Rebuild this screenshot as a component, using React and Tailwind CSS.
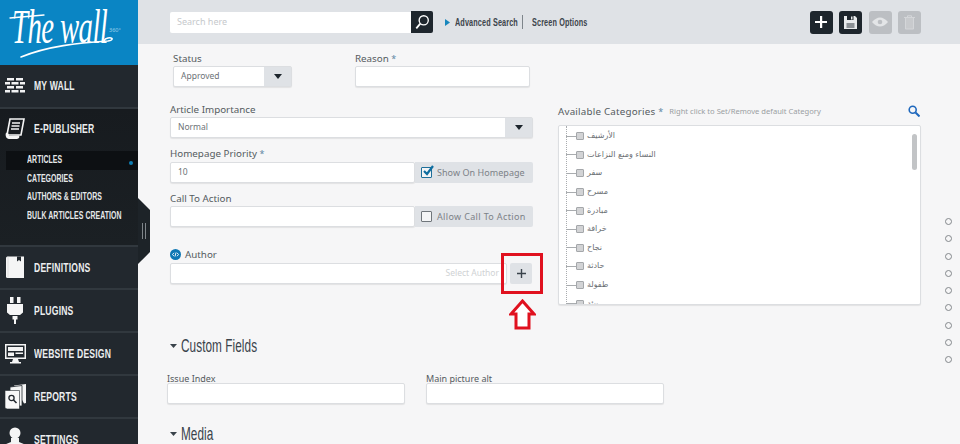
import React from "react";

const narrow = "font-['Liberation_Sans',sans-serif] inline-block origin-left scale-x-[0.66] whitespace-nowrap";
const body = "font-['Noto_Sans','DejaVu_Sans',sans-serif]";
const field = "bg-white border border-[#dcdee1] rounded-[2px] shadow-[0_1px_1px_rgba(0,0,0,0.08)]";
const iconCol = "w-[34px] pr-[4px] flex justify-center shrink-0";

const Caret = () => (
  <svg width="8" height="5" viewBox="0 0 8 5"><path d="M0 0h8L4 5z" fill="#1d252c" /></svg>
);

const icons = {
  wall: (
    <svg width="20" height="18" viewBox="0 0 20 18" fill="#f1f2f3">
      <path d="M2 1h7v2.500H2zM11 1h7v2.500h-7zM0 5h5v2.500H0zM6.500 5h7v2.500h-7zM15 5h5v2.500h-5zM2 9h7v2.500H2zM11 9h7v2.500h-7zM0 13h5v2.500H0zM6.500 13h7v2.500h-7zM15 13h5v2.500h-5z" />
    </svg>
  ),
  book: (
    <svg width="20" height="23" viewBox="0 0 20 23">
      <path d="M1 2q0-1.500 1.500-1.500H19V22H2.500Q1 22 1 20.500z" fill="#f5f5f5" />
      <path d="M12 .5h4v5l-2-1.500-2 1.500z" fill="#22282e" />
      <path d="M3 .5v21" stroke="#d0d0d0" strokeWidth=".6" />
    </svg>
  ),
  plug: (
    <svg width="18" height="27" viewBox="0 0 18 27" fill="#f5f5f5">
      <path d="M4 0h3.500v6H4zM11 0h3.500v6H11zM1 7h16v8.500l-3 2.500H4l-3-2.500zM6.500 19h5v3.500h-1.500V27H8v-4.500H6.500z" />
    </svg>
  ),
  monitor: (
    <svg width="21" height="20" viewBox="0 0 21 20">
      <path d="M0 0h21v15H0z" fill="#f5f5f5" />
      <path d="M1.500 1.500h18v12h-18z" fill="#22282e" />
      <path d="M3 3h15v4H3zM3 8.500h6v3.500H3zM10.500 8.500H18v1.500h-7.500z" fill="#f5f5f5" />
      <path d="M8 15h5l1 3h2v1.500H5V18h2z" fill="#f5f5f5" />
    </svg>
  ),
  reports: (
    <svg width="21" height="26" viewBox="0 0 21 26">
      <path d="M8 0l12-1.500v19L18 18z" fill="#f5f5f5" transform="translate(1 1.500)" />
      <path d="M5 3l12-1.500V22H5z" fill="#f5f5f5" stroke="#22282e" strokeWidth=".8" />
      <path d="M0 6.500h14.500V25H2l-2-1z" fill="#f8f8f8" stroke="#22282e" strokeWidth=".6" />
      <circle cx="6.500" cy="14" r="2.600" fill="none" stroke="#22282e" strokeWidth="1.300" />
      <path d="M8.500 16l3 3" stroke="#22282e" strokeWidth="1.600" />
    </svg>
  ),
  user: (
    <svg width="22" height="26" viewBox="0 0 22 26" fill="#f5f5f5">
      <circle cx="11" cy="6" r="5.500" />
      <path d="M7 11h8v4l6 2.500V24H1v-6.500L7 15z" />
    </svg>
  ),
};

const navText = `${narrow} text-[#eceeef] font-bold text-[13px] tracking-[0.3px]`;

const NavItem = ({ icon, label }) => (
  <div className="h-[43px] flex items-center bg-[#22282e] border-t-2 border-[#31383e] shrink-0">
    <div className={iconCol}>{icon}</div>
    <span className={navText}>{label}</span>
  </div>
);

const SubItem = ({ label, active }) => (
  <div className={`relative ml-[6px] h-[18.500px] pl-[21px] flex items-center ${active ? "bg-[#0d1013]" : ""}`}>
    <span className={`${narrow} text-[#e6e8ea] font-bold text-[10.500px] tracking-[0.1px]`}>{label}</span>
    {active && <span className="absolute right-[5px] top-[10px] w-[4px] h-[4px] rounded-full bg-[#0f7fb5]" />}
  </div>
);

const Sidebar = () => (
  <aside className="w-[138px] shrink-0 flex flex-col h-full">
    <div className="h-[65px] bg-[#0a85c4] relative overflow-hidden shrink-0">
      <span className="absolute left-[12px] top-[3px] font-['Liberation_Serif',serif] italic text-white text-[48px] leading-none tracking-[-1px] origin-left scale-x-[0.6] whitespace-nowrap">The wall</span>
      <span className={`${body} absolute left-[109px] top-[26px] text-[5.500px] text-[#9fd0ea]`}>360°</span>
      <svg className="absolute left-[8px] top-[12px]" width="106" height="48" viewBox="0 0 106 48" fill="none">
        <path d="M2 6L36 3" stroke="#fff" strokeWidth="1.300" strokeLinecap="round" />
        <path d="M13 45C40 34 70 31 100 29c6-1 5-4 0-3-4 1-5 3-2 4" stroke="#fff" strokeWidth="1.600" strokeLinecap="round" />
      </svg>
    </div>
    <div className="h-[42px] flex items-center bg-[#22282e] shrink-0">
      <div className={iconCol}>{icons.wall}</div>
      <span className={navText}>MY WALL</span>
    </div>
    <div className="h-[138px] shrink-0 bg-gradient-to-b from-[#171b1f] to-[#1b2024] border-t-2 border-[#31383e]">
      <div className="h-[39px] mb-[3px] flex items-center">
        <div className={iconCol}>
          <svg width="20" height="22" viewBox="0 0 20 22">
            <path d="M5 1h14l-3 16H2z" fill="none" stroke="#f5f5f5" strokeWidth="1.600" />
            <path d="M7 5h8M6.500 8h8M6 11h8" stroke="#f5f5f5" strokeWidth="1.300" />
            <path d="M1 15c2-1 3 1 3 3l10-.5c1 2 0 3-2 3.500H4C1 21 0 17 1 15z" fill="#f5f5f5" />
          </svg>
        </div>
        <span className={navText}>E-PUBLISHER</span>
      </div>
      <SubItem label="ARTICLES" active />
      <SubItem label="CATEGORIES" />
      <SubItem label="AUTHORS & EDITORS" />
      <SubItem label="BULK ARTICLES CREATION" />
    </div>
    <NavItem icon={icons.book} label="DEFINITIONS" />
    <NavItem icon={icons.plug} label="PLUGINS" />
    <NavItem icon={icons.monitor} label="WEBSITE DESIGN" />
    <NavItem icon={icons.reports} label="REPORTS" />
    <NavItem icon={icons.user} label="SETTINGS" />
  </aside>
);

const HeadBtn = ({ on, children }) => (
  <div className={`w-[23px] h-[23px] rounded-[3px] flex items-center justify-center ${on ? "bg-[#1e262d]" : "bg-[#bcbfc3]"}`}>{children}</div>
);

const headLink = `${narrow} text-[11px] text-[#3d454c] font-bold tracking-[0.2px]`;

const Header = () => (
  <header className="relative h-[44px] shrink-0 bg-[#dfe2e6] flex items-center pl-[32px] pr-[39px]">
    <div className="w-[241px] h-[21px] bg-white rounded-l-[2px] flex items-center pl-[7px]">
      <span className={`${body} text-[9px] text-[#c6c9cc]`}>Search here</span>
    </div>
    <div className="w-[22px] h-[22px] bg-[#1e262d] rounded-r-[2px] flex items-center justify-center">
      <svg width="16" height="16" viewBox="0 0 14 14" fill="none" stroke="#fff">
        <circle cx="8.500" cy="5.500" r="4" strokeWidth="1.200" />
        <path d="M5.500 8.500L2 12.500" strokeWidth="1.600" />
      </svg>
    </div>
    <svg className="ml-[12px]" width="5" height="7" viewBox="0 0 5 7"><path d="M0 0l5 3.500L0 7z" fill="#1787bd" /></svg>
    <span className={`${headLink} ml-[5px] w-[61px]`}>Advanced Search</span>
    <span className="w-px h-[14px] bg-[#7e858b] ml-[6px]" />
    <span className={`${headLink} ml-[9px] w-[53px]`}>Screen Options</span>
    <div className="ml-auto flex gap-[6.500px]">
      <HeadBtn on>
        <svg width="14" height="14" viewBox="0 0 14 14"><path d="M6 1h2.200v4.900H13v2.200H8.200V13H6V8.100H1V5.900h5z" fill="#fff" /></svg>
      </HeadBtn>
      <HeadBtn on>
        <svg width="15" height="15" viewBox="0 0 15 15">
          <path d="M1 1h11l2 2v11H1z" fill="#e8eaec" />
          <path d="M4 1h6.500v4H4z" fill="#1e262d" />
          <path d="M8 1.500h1.500v3H8z" fill="#e8eaec" />
          <path d="M3.500 8h8v5h-8z" fill="#8b9095" />
        </svg>
      </HeadBtn>
      <HeadBtn>
        <svg width="16" height="10" viewBox="0 0 16 10">
          <path d="M0 5q8-9 16 0q-8 9-16 0z" fill="#e3e5e7" />
          <circle cx="8" cy="5" r="2.300" fill="#bcbfc3" />
        </svg>
      </HeadBtn>
      <HeadBtn>
        <svg width="11" height="15" viewBox="0 0 11 15" fill="none" stroke="#d4d6d9">
          <path d="M0 2.500h11M3.500 2.500V.8h4v1.700" />
          <path d="M1.500 3v11h8V3" fill="#c8cacd" />
        </svg>
      </HeadBtn>
    </div>
    <div className="absolute left-[222px] top-[44px] w-[170px] h-px bg-[#e6e7e9]" />
    <div className="absolute left-[612px] top-[44px] w-[170px] h-px bg-[#e6e7e9]" />
  </header>
);

const labelCls = `${body} block h-[14px] pt-[1px] text-[9.800px] leading-[14px] text-[#555b60] whitespace-nowrap`;
const smallLabel = `${body} block h-[12px] pt-[2px] text-[9px] leading-[12px] text-[#555b60] whitespace-nowrap`;
const star = "text-[#5f87a3] text-[9px]";

const Select = ({ value, className }) => (
  <div className={`${field} h-[21px] flex items-center ${className}`}>
    <span className={`${body} pl-[7px] text-[8.500px] text-[#6d7277]`}>{value}</span>
    <div className="ml-auto w-[27px] h-full bg-[#dfe2e6] flex items-center justify-center"><Caret /></div>
  </div>
);

const CheckAddon = ({ checked, label, track }) => (
  <div className="w-[118px] h-[21px] bg-[#dfe2e6] flex items-center pl-[6px] rounded-r-[2px]">
    <span className={`relative w-[11px] h-[11px] border ${checked ? "border-[#1d6f9a]" : "border-[#70767b]"} bg-[#f4f5f6] rounded-[1px] shrink-0`}>
      {checked && (
        <svg className="absolute -left-[0.500px] -top-[3px]" width="13" height="12" viewBox="0 0 13 12" fill="none">
          <path d="M2 6l3 3 6-8" stroke="#0f6ea0" strokeWidth="2.200" />
        </svg>
      )}
    </span>
    <span className={`${body} ${track} ml-[5px] text-[9px] text-[#7c8186] whitespace-nowrap`}>{label}</span>
  </div>
);

const cats = ["الأرشيف", "النساء ومنع النزاعات", "سفر", "مسرح", "مبادرة", "خرافة", "نجاح", "حادثة", "طفولة", "بيئة"];

const Tree = () => (
  <div className={`${field} relative h-[180px] overflow-hidden pt-[1px] mt-[7px]`}>
    <div className="absolute left-[7px] top-0 bottom-0 border-l border-dotted border-[#a9acaf]" />
    {cats.map((c) => (
      <div key={c} className="h-[18.600px] flex items-center pl-[7px]">
        <span className="w-[10px] border-t border-[#a9acaf]" />
        <span className="w-[8px] h-[8px] bg-[#d2d3d5] border border-[#a4a7aa] rounded-[1px] shrink-0" />
        <span dir="rtl" className="ml-[3px] font-['DejaVu_Sans',sans-serif] text-[8px] text-[#6a6e72] whitespace-nowrap">{c}</span>
      </div>
    ))}
    <div className="absolute right-[3px] top-[8px] w-[5px] h-[36px] rounded-[3px] bg-[#c2c4c6]" />
  </div>
);

const Triangle = () => <svg width="7" height="4" viewBox="0 0 7 4"><path d="M0 0h7L3.500 4z" fill="#3a434b" /></svg>;

const SectionHead = ({ title }) => (
  <div className="flex items-center gap-[4px]">
    <Triangle />
    <span className="font-['Liberation_Sans',sans-serif] inline-block origin-left scale-x-[0.62] whitespace-nowrap text-[19px] leading-[24px] text-[#3a434b] tracking-[0.1px]">{title}</span>
  </div>
);

const Form = () => (
  <div className="flex-1 bg-[#f6f6f7] relative pl-[32px] pt-[7px] overflow-hidden">
    <div className="flex gap-[25px] h-[283px]">
      <div className="w-[363px] shrink-0">
        <div className="flex pl-[3px] gap-[63px] h-[36px]">
          <div className="w-[119px]">
            <label className={labelCls}>Status</label>
            <Select value="Approved" className="mt-[1px]" />
          </div>
          <div className="w-[175px]">
            <label className={labelCls}>Reason <span className={star}>*</span></label>
            <div className={`${field} h-[21px] mt-[1px]`} />
          </div>
        </div>
        <label className={`${labelCls} mt-[15px]`}>Article Importance</label>
        <Select value="Normal" className="mt-[1px]" />
        <label className={`${labelCls} mt-[8px]`}>Homepage Priority <span className={star}>*</span></label>
        <div className="flex mt-[2px]">
          <div className={`${field} w-[245px] h-[21px] flex items-center pl-[7px]`}>
            <span className={`${body} text-[8.500px] text-[#6d7277]`}>10</span>
          </div>
          <CheckAddon checked label="Show On Homepage" track="tracking-[0.05px]" />
        </div>
        <label className={`${labelCls} mt-[8px]`}>Call To Action</label>
        <div className="flex mt-[1px]">
          <div className={`${field} w-[245px] h-[21px]`} />
          <CheckAddon label="Allow Call To Action" track="tracking-[0.35px]" />
        </div>
        <div className="flex items-center gap-[4px] mt-[20px]">
          <span className="w-[11px] h-[11px] rounded-full bg-[#1078b4] flex items-center justify-center">
            <svg width="7" height="5" viewBox="0 0 7 5" fill="none" stroke="#fff" strokeWidth=".9"><path d="M2 .8L.5 2.500 2 4.200M5 .8l1.500 1.700L5 4.200M4 .5L3 4.500" /></svg>
          </span>
          <label className={labelCls}>Author</label>
        </div>
        <div className="flex items-center mt-[2px]">
          <div className={`${field} w-[337px] h-[21px] flex items-center justify-end pr-[7px]`}>
            <span className={`${body} text-[8.500px] text-[#cfd2d4]`}>Select Author</span>
          </div>
          <div className="ml-[3px] w-[22px] h-[21px] rounded-[2px] bg-[#dfe2e6] flex items-center justify-center">
            <svg width="9" height="9" viewBox="0 0 9 9"><path d="M3.800 0h1.400v3.800H9v1.400H5.200V9H3.800V5.200H0V3.800h3.800z" fill="#3a434b" /></svg>
          </div>
        </div>
      </div>
      <div className="w-[363px] shrink-0 pt-[53px]">
        <div className="flex items-center h-[14px]">
          <label className={`${labelCls} tracking-[0.2px]`}>Available Categories <span className={star}>*</span></label>
          <span className={`${body} ml-[6px] pt-[1px] text-[7.600px] text-[#9a9ea2] whitespace-nowrap`}>Right click to Set/Remove default Category</span>
          <svg className="ml-auto mr-[1px] -mt-[1px]" width="12" height="12" viewBox="0 0 12 12" fill="none" stroke="#1f68bd">
            <circle cx="4.700" cy="4.700" r="3.500" strokeWidth="1.600" />
            <path d="M7.500 7.500l4 4" strokeWidth="2" />
          </svg>
        </div>
        <Tree />
      </div>
    </div>
    <SectionHead title="Custom Fields" />
    <div className="flex gap-[21px] mt-[13px] -ml-[3px]">
      <div className="w-[238px]">
        <label className={smallLabel}>Issue Index</label>
        <div className={`${field} h-[21px]`} />
      </div>
      <div className="w-[238px]">
        <label className={smallLabel}>Main picture alt</label>
        <div className={`${field} h-[21px]`} />
      </div>
    </div>
    <div className="mt-[18px]"><SectionHead title="Media" /></div>

    {/* callout over the + button */}
    <div className="absolute left-[363px] top-[209px] w-[42px] h-[41px] border-[3px] border-[#e0111f]" />
    <svg className="absolute left-[371px] top-[255px]" width="27" height="31" viewBox="0 0 27 31" fill="#fff" stroke="#e0111f" strokeWidth="3">
      <path d="M13.500 2L25 15h-5v14H7V15H2z" />
    </svg>
    {/* side pager */}
    <div className="absolute right-[8px] top-[174px] flex flex-col gap-[10.300px]">
      {[0, 1, 2, 3, 4, 5, 6, 7, 8].map((i) => (
        <span key={i} className="w-[7px] h-[7px] rounded-full border border-[#84888c]" />
      ))}
    </div>
  </div>
);

export default function App() {
  return (
    <div className="relative w-[960px] h-[444px] flex overflow-hidden bg-[#f6f6f7]">
      <Sidebar />
      <main className="flex-1 flex flex-col min-w-0">
        <Header />
        <Form />
      </main>
      {/* collapse handle */}
      <div className="absolute left-[138px] top-[198px] w-[12px] h-[66px] bg-[#1d2328] [clip-path:polygon(0_0,100%_18%,100%_82%,0_100%)] flex items-center justify-center gap-[2px]">
        <span className="w-px h-[16px] bg-[#7f858a]" />
        <span className="w-px h-[16px] bg-[#7f858a]" />
      </div>
    </div>
  );
}
